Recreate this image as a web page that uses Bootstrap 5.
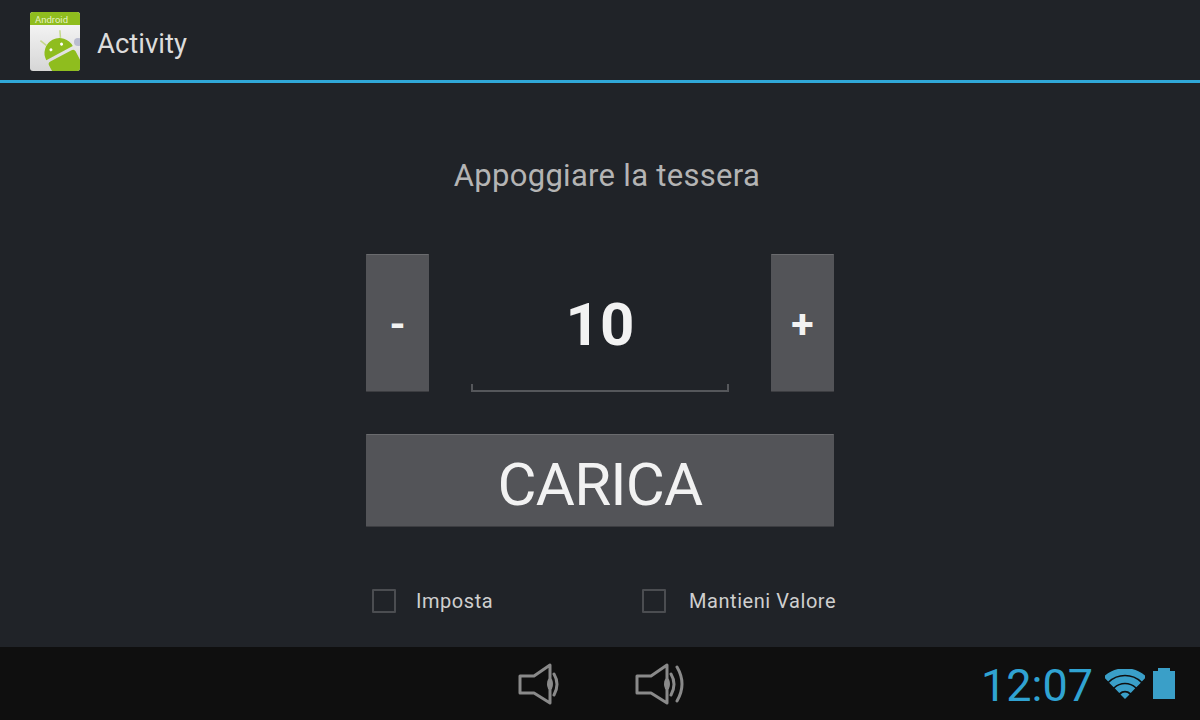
<!DOCTYPE html>
<html lang="it">
<head>
  <meta charset="UTF-8" />
  <title>Activity</title>
  <meta name="viewport" content="width=device-width, initial-scale=1" />
  <link href="https://cdn.jsdelivr.net/npm/bootstrap@5.3.3/dist/css/bootstrap.min.css" rel="stylesheet">
  <style>
    html, body {
      height: 100%;
    }
    body {
      background: #202328;
      font-family: Roboto, "Liberation Sans", sans-serif;
      overflow: hidden;
    }
    .screen {
      height: 720px;
    }
    .action-bar {
      height: 83px;
      background: #202328;
      border-bottom: 3px solid #30a8d8;
      padding-left: 29px;
      padding-top: 3px;
      gap: 16px;
    }
    .action-title {
      font-size: 27.5px;
      color: #dcdcdc;
      line-height: 1;
    }
    .app-content {
      width: 468px;
      padding-top: 75px;
    }
    .hint-text {
      font-size: 31px;
      line-height: 36px;
      color: #b4b4b4;
      letter-spacing: .3px;
      text-align: center;
      margin-left: 14px;
      margin-bottom: 60px;
    }
    .holo-btn {
      background: #535458;
      color: #f2f2f2;
      border: 0;
      border-top: 1px solid #6a6b6e;
      border-bottom: 1px solid #3c3d41;
      border-radius: 1px;
      padding: 0;
      font-weight: 700;
    }
    .holo-btn:hover {
      background: #535458;
      color: #f2f2f2;
    }
    .step-btn {
      width: 63px;
      height: 138px;
      font-size: 41px;
      line-height: 1;
      padding-top: 2px;
    }
    .value-field {
      width: 258px;
      height: 138px;
      font-size: 60px;
      font-weight: 700;
      color: #f2f2f2;
      border-bottom: 2px solid #55575b;
      padding-top: 6px;
      position: relative;
    }
    .value-field::before,
    .value-field::after {
      content: "";
      position: absolute;
      bottom: 0;
      width: 2px;
      height: 6px;
      background: #55575b;
    }
    .value-field::before {
      left: 0;
    }
    .value-field::after {
      right: 0;
    }
    .load-btn {
      height: 93px;
      margin-top: 42px;
      font-size: 60px;
      letter-spacing: -.8px;
      font-weight: 400;
      line-height: 1;
      padding-top: 8px;
    }
    .check-row {
      margin-top: 59px;
      padding-left: 6px;
      font-size: 20px;
      letter-spacing: .55px;
      color: #cfcfcf;
    }
    .check-box {
      width: 24px;
      height: 24px;
      border: 2px solid #4b4d51;
      border-radius: 1px;
      flex: none;
    }
    .check-one {
      flex: none;
      width: 270px;
      gap: 20px;
    }
    .check-two {
      flex: none;
      gap: 23px;
      white-space: nowrap;
    }
    .system-bar {
      height: 73px;
      background: #0f0f0f;
      padding-left: 517px;
      padding-right: 25px;
    }
    .nav-icons {
      gap: 73px;
    }
    .clock {
      font-size: 45px;
      font-weight: 400;
      color: #30a3d2;
      line-height: 1;
      margin-right: 4px;
      padding-top: 3px;
    }
  </style>
</head>
<body>

<div class="screen d-flex flex-column">
  <!-- action bar -->
  <div class="action-bar d-flex align-items-center">
    <svg width="52" height="60" viewBox="0 0 52 60">
      <defs>
        <linearGradient id="paper" x1="0" y1="0" x2="0" y2="1">
          <stop offset="0" stop-color="#fbfbfb" />
          <stop offset="1" stop-color="#d6d6d6" />
        </linearGradient>
        <clipPath id="iconClip">
          <rect x="1" y="0" width="50" height="59" rx="3" />
        </clipPath>
      </defs>
      <g clip-path="url(#iconClip)">
        <rect x="1" y="0" width="50" height="59" fill="url(#paper)" />
        <rect x="1" y="0" width="50" height="13" fill="#8fbd1e" />
        <text x="6" y="11" font-family="Roboto, sans-serif" font-size="9.5" fill="#e6f1c4">Android</text>
        <circle cx="49" cy="30" r="4" fill="#b9bcd0" />
        <g transform="rotate(-28 31 42)">
          <path d="M16 41a15 15 0 0 1 30 0z" fill="#8fbd1e" />
          <rect x="16" y="44" width="30" height="30" rx="3" fill="#8fbd1e" />
          <path d="M23 28l-3-7" stroke="#c4d98a" stroke-width="1.5" />
          <path d="M39 28l3-7" stroke="#c4d98a" stroke-width="1.5" />
          <circle cx="25" cy="34" r="1.5" fill="#fff" />
          <circle cx="37" cy="34" r="1.5" fill="#fff" />
        </g>
      </g>
    </svg>
    <span class="action-title mt-1">Activity</span>
  </div>

  <!-- main form -->
  <div class="flex-grow-1 d-flex justify-content-center">
    <div class="app-content">
      <div class="hint-text">Appoggiare la tessera</div>
      <div class="d-flex justify-content-between align-items-center">
        <button type="button" class="btn holo-btn step-btn">-</button>
        <div class="value-field d-flex align-items-center justify-content-center">10</div>
        <button type="button" class="btn holo-btn step-btn">+</button>
      </div>
      <button type="button" class="btn holo-btn load-btn w-100 d-block">CARICA</button>
      <div class="check-row d-flex align-items-center">
        <div class="check-one d-flex align-items-center">
          <span class="check-box"></span>
          <span>Imposta</span>
        </div>
        <div class="check-two d-flex align-items-center">
          <span class="check-box"></span>
          <span>Mantieni Valore</span>
        </div>
      </div>
    </div>
  </div>

  <!-- system bar -->
  <div class="system-bar d-flex align-items-center">
    <div class="nav-icons d-flex">
      <svg width="44" height="42" viewBox="0 0 44 42" fill="none" stroke="#8a8a8a" stroke-width="3">
        <path d="M3 13h14L33 2v38L17 30H3z" stroke-linejoin="round" />
        <ellipse cx="33" cy="21" rx="3" ry="6" fill="#8a8a8a" stroke="none" />
        <path d="M37 11q6 10 0 21" stroke-linecap="round" />
      </svg>
      <svg width="50" height="42" viewBox="0 0 50 42" fill="none" stroke="#8a8a8a" stroke-width="3">
        <path d="M3 13h14L33 2v38L17 30H3z" stroke-linejoin="round" />
        <ellipse cx="33" cy="21" rx="3" ry="6" fill="#8a8a8a" stroke="none" />
        <path d="M37 11q6 10 0 21M43 4q10 17 0 34" stroke-linecap="round" />
      </svg>
    </div>
    <span class="clock ms-auto">12:07</span>
    <svg class="ms-2" width="40" height="30" viewBox="0 0 40 30" fill="none" stroke="#3a9fc8" stroke-width="6.5">
      <path d="M0.9 10.2A27.5 27.5 0 0 1 39.1 10.2" />
      <path d="M6.4 16A19.5 19.5 0 0 1 33.6 16" />
      <path d="M12 21.7A11.5 11.5 0 0 1 28 21.7" />
      <path d="M20 30L15.5 25.4A6.4 6.4 0 0 1 24.5 25.4z" fill="#3a9fc8" stroke="none" />
    </svg>
    <svg class="ms-2" width="22" height="31" viewBox="0 0 22 31">
      <path d="M5 0h12v3h5v28H0V3h5z" fill="#3a9fc8" />
    </svg>
  </div>
</div>

<script src="https://cdn.jsdelivr.net/npm/bootstrap@5.3.3/dist/js/bootstrap.bundle.min.js"></script>
</body>
</html>
